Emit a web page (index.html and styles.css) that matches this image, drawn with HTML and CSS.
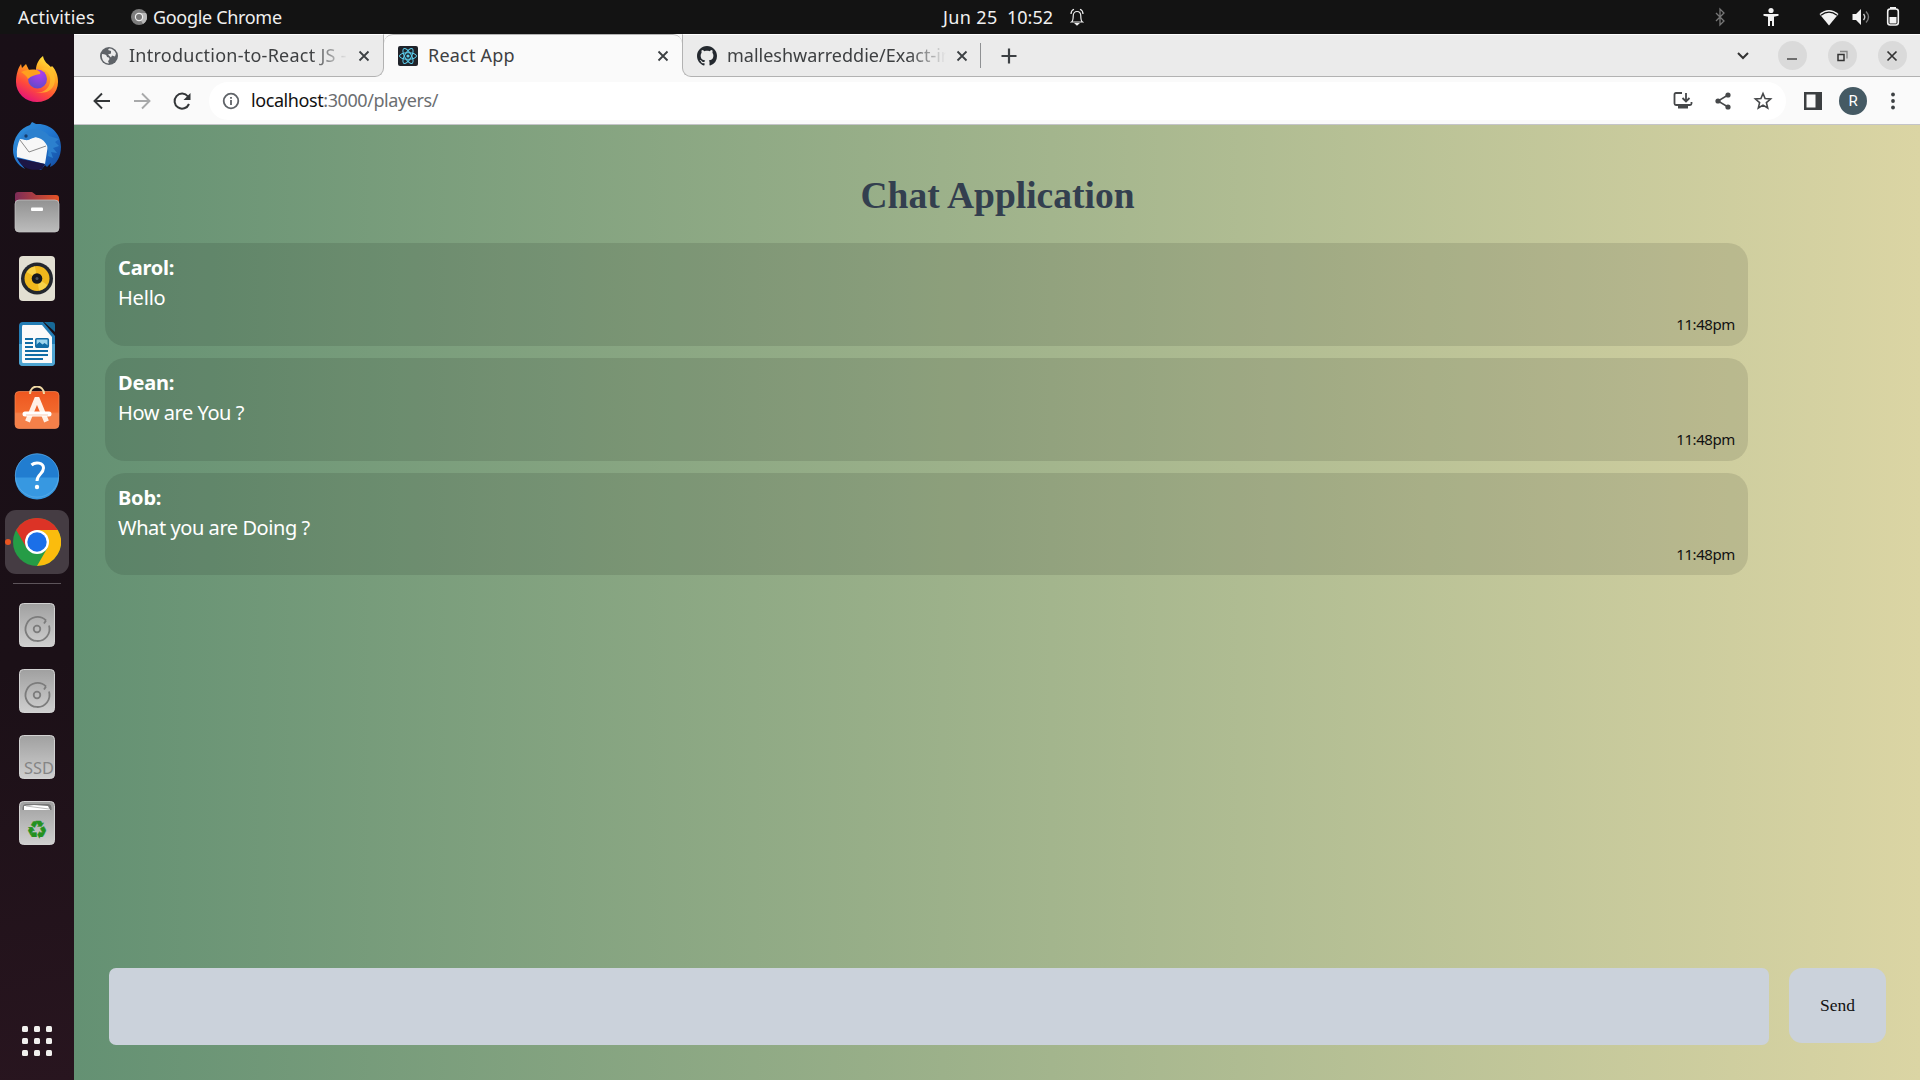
FILE: index.html
```html
<!DOCTYPE html>
<html lang="en">
<head>
<meta charset="utf-8">
<title>React App</title>
<link rel="stylesheet" href="styles.css">
</head>
<body>
<header class="topbar">
  <span class="activities">Activities</span>
  <svg class="app-icon" width="16" height="16" viewBox="0 0 16 16"><circle cx="8" cy="8" r="8" fill="#7d7d7d"/><path d="M8 8 12 15A8 8 0 0 0 15 4H8z" fill="#b8b8b8"/><circle cx="8" cy="8" r="4.2" fill="#eee"/><circle cx="8" cy="8" r="3" fill="#777"/></svg>
  <span class="app-name">Google Chrome</span>
  <div class="clock"><span class="date">Jun 25</span><span class="time-now">10:52</span>
    <svg width="14" height="18" viewBox="0 0 14 18" fill="none" stroke="#eee" stroke-width="1.2"><path d="M1.5 14c1.7-1 1.7-3 1.7-6C3.2 5 5 3.5 7 3.5S10.800 5 10.800 8c0 3 0 5 1.700 6z"/><path d="M1 6C1 4 2.300 2 4 1.300M13 6c0-2-1.300-4-3-4.700"/><path d="M5.500 15.500h3L7 17z" fill="#eee"/></svg>
  </div>
  <div class="system">
    <svg class="bt" width="32" height="20" viewBox="0 0 32 20" fill="none" stroke="#777" stroke-width="1.300"><path d="M12 6l8 8-4 4V2l4 4-8 8"/></svg>
    <svg class="access" width="32" height="20" viewBox="0 0 32 20" fill="#f2f2f2"><circle cx="16" cy="3.500" r="2.600"/><path d="M8.500 7h15v1.700l-4.500 1V19h-2v-5h-2v5h-2V9.700l-4.500-1z"/></svg>
    <svg width="32" height="20" viewBox="0 0 32 20"><path d="M6.500 7q9.500-8 19 0L16 18.500z" fill="#f2f2f2"/><path d="M8 8.200q8-6 16 0" fill="none" stroke="#131313" stroke-width="1.300"/></svg>
    <svg width="32" height="20" viewBox="0 0 32 20" fill="none" stroke-width="1.400"><path d="M7.500 7h3.500l5-5v16l-5-5H7.500z" fill="#f2f2f2"/><path d="M18.500 7q2.500 3 0 6" stroke="#ccc"/><path d="M21 4.500q5 5.500 0 11" stroke="#777"/></svg>
    <svg width="32" height="20" viewBox="0 0 32 20"><path d="M13 0h6v2h-6z" fill="#f2f2f2"/><rect x="10.700" y="2" width="10.600" height="16" rx="2.500" fill="none" stroke="#f2f2f2" stroke-width="1.600"/><path d="M12.500 10h7v6.500h-7z" fill="#f2f2f2"/></svg>
  </div>
</header>
<div class="desktop">
<nav class="dock">
  <div class="dock-item"><svg width="48" height="48" viewBox="0 1 48 48">
    <defs><linearGradient id="ff" x1=".8" y1="0" x2=".3" y2="1"><stop offset="0" stop-color="#ffef40"/><stop offset=".4" stop-color="#ff9a1f"/><stop offset=".7" stop-color="#ff4b3a"/><stop offset="1" stop-color="#e3127b"/></linearGradient><radialGradient id="fp" cx=".6" cy=".2" r=".9"><stop offset="0" stop-color="#b43af0"/><stop offset="1" stop-color="#5a4cc4"/></radialGradient></defs>
    <path d="M3 27C3 20 5 13 8 9l1 4 4-4 3 6 7 0c0-6 3-11 7-14 1 6 5 8 8 11l1-1c4 4 6 10 6 16A21 20 0 0 1 3 27z" fill="url(#ff)"/>
    <circle cx="24.500" cy="24" r="9.500" fill="url(#fp)"/><path d="M8 17c5-2 10-3 16-2 3 1 4 3 3 4-5 1-9 2-12 5-1-3-4-5-7-7z" fill="#ffa01e"/><path d="M28 14c7 1 10 7 9 13-1 7-8 12-15 10 11 3 20-2 20-13-1-9-7-13-14-10z" fill="#ffc22e" opacity=".7"/></svg></div>
  <div class="dock-item"><svg width="48" height="48" viewBox="0 0 48 48">
    <defs><linearGradient id="tb" x1="0" y1="0" x2="1" y2="1"><stop offset="0" stop-color="#3394dd"/><stop offset=".5" stop-color="#2277cf"/><stop offset="1" stop-color="#134aa0"/></linearGradient></defs>
    <path d="M0 28C0 16 7 6 17 3l2-3 4 2c14-1 25 9 25 23 0 9-4 17-11 20l1-4-4 4-2-2-4 5-22-9 6 8C4 43 0 36 0 28z" fill="url(#tb)"/>
    <path d="M7 17l7 1 9-3 9 2 3 6-3 19L4 35Q3 25 7 17z" fill="#f7f7f7"/><path d="M7 18l9 12 17-6" fill="none" stroke="#8b8b8b"/><path d="M8 16C11 6 28 3 36 14l10 3-4 3 4 4-6 2 4 5-6-1 2 6-5-2C37 24 31 16 22 15c-4 0-5 4-10 3z" fill="#2c80ce"/><path d="M4 36l28 6-3 5C17 50 8 45 4 36z" fill="#1c1645"/><circle cx="13" cy="14" r="1.700" fill="#163d6d"/></svg></div>
  <div class="dock-item"><svg width="48" height="48" viewBox="0 0 48 48"><defs><linearGradient id="fo"><stop stop-color="#7c2c58"/><stop offset="1" stop-color="#e65325"/></linearGradient><linearGradient id="gr" x2="0" y2="1"><stop stop-color="#929292"/><stop offset="1" stop-color="#bcbcbc"/></linearGradient></defs>
    <path d="M2 16V7q0-3 3-3h14l4 3h20q3 0 3 3v10z" fill="url(#fo)"/><rect x="2" y="12" width="44" height="32" rx="4" fill="url(#gr)" stroke="#c7c7c7" stroke-width=".7"/><rect x="18" y="19.500" width="12" height="3.500" rx="1" fill="#fff"/></svg></div>
  <div class="dock-item"><svg width="48" height="48" viewBox="0 0 48 48"><rect x="6" y="2" width="36" height="45" rx="4" fill="#e2dfd2"/><circle cx="24" cy="24.500" r="16" fill="#23272e"/><circle cx="24" cy="24.500" r="12.500" fill="#f0b81c"/><path d="M13.500 18A12 12 0 0 1 22 12.500L24 24zM34.500 31A12 12 0 0 1 26 36.500L24 24z" fill="#f8d248"/><circle cx="24" cy="24.500" r="5.300" fill="#15181d"/><circle cx="24" cy="24.500" r="1.500" fill="#48515c"/></svg></div>
  <div class="dock-item"><svg width="48" height="48" viewBox="0 0 48 48"><path d="M6 6q0-4 4-4h20l12 14v26q0 4-4 4H10q-4 0-4-4z" fill="#247eb6"/><path d="M6 24h36v18q0 4-4 4H10q-4 0-4-4z" fill="#4fa5d2"/><path d="M10 5h19l10 12v26H10q-1 0-1-2V7q0-2 1-2z" fill="#fafafa"/><path d="M31 2h8q3 0 3 3v7z" fill="#176997"/><path d="M12 19h8M12 23h8M12 27h8M12 31h23M12 35h23M12 39h18" stroke="#116ca5" stroke-width="2"/><rect x="22.800" y="18.800" width="12.500" height="8.500" rx="1" fill="#9bd4ed" stroke="#116ca5" stroke-width="1.600"/><path d="M23 27.500v-2.500l3.500-3 3 2.500 2-1.500 3.500 2.500v2z" fill="#116ca5"/></svg></div>
  <div class="dock-item"><svg width="48" height="48" viewBox="0 3.500 48 48"><defs><linearGradient id="so" x2="0" y2="1"><stop stop-color="#ee5720"/><stop offset=".55" stop-color="#f2692d"/><stop offset=".6" stop-color="#f48049"/></linearGradient></defs><rect x="2" y="9" width="44" height="37" rx="4" fill="url(#so)" stroke="#f68b56" stroke-width=".7"/><path d="M17 11.500c0-10 14-10 14 0" fill="none" stroke="#efd9a5" stroke-width="2"/><path d="M14.500 39 23.500 17h1l9 22" fill="none" stroke="#fff0e5" stroke-width="5"/><path d="M12 31.500h24" stroke="#fff" stroke-width="5" stroke-linecap="round"/><path d="M13 32.500h22" stroke="#f4b190" stroke-width=".7"/></svg></div>
  <div class="dock-item"><svg width="48" height="48" viewBox="0 1.500 48 48"><circle cx="24" cy="25" r="22" fill="#217dd0"/><path d="M2 27a22 22 0 0 0 44 0z" fill="#3798e1"/><circle cx="24" cy="25" r="21.700" fill="none" stroke="#67b2ea" stroke-width=".6"/><path d="M18.500 14.500c4-3.500 12-2.500 12 3 0 6-6.500 6-6.500 13" fill="none" stroke="#fff" stroke-width="3"/><circle cx="24" cy="36.500" r="2.200" fill="#fff"/></svg></div>
  <div class="dock-item active"><svg width="48" height="48" viewBox="0 0 48 48"><circle cx="24" cy="24" r="24" fill="#259c46"/><path d="M3.200 12A24 24 0 0 1 44.800 12H24L13.600 30z" fill="#dc3326"/><path d="M44.800 12A24 24 0 0 1 24 48L34.400 30 24 12z" fill="#fbbc0d"/><circle cx="24" cy="24" r="12" fill="#fff"/><circle cx="24" cy="24" r="9.700" fill="#1b6fe8"/></svg></div>
  <div class="dock-line"></div>
  <div class="dock-item"><svg class="drive" width="36" height="44" viewBox="0 0 36 44" fill="none" stroke="#7c7c7c" stroke-width="1.800"><defs><linearGradient id="case" x2="0" y2="1"><stop stop-color="#a0a0a0"/><stop offset="1" stop-color="#cfcfcf"/></linearGradient></defs><rect class="case" x=".500" y=".500" width="35" height="43" rx="4" fill="url(#case)"/><path d="M27 17.500A12 12 0 1 0 30 22.500M27 17.500l-2 3"/><circle cx="18" cy="26" r="3.300"/></svg></div>
  <div class="dock-item"><svg class="drive" width="36" height="44" viewBox="0 0 36 44" fill="none" stroke="#7c7c7c" stroke-width="1.800"><rect class="case" x=".500" y=".500" width="35" height="43" rx="4" fill="url(#case)"/><path d="M27 17.500A12 12 0 1 0 30 22.500M27 17.500l-2 3"/><circle cx="18" cy="26" r="3.300"/></svg></div>
  <div class="dock-item"><svg width="36" height="44" viewBox="0 0 36 44"><rect class="case" x=".500" y=".500" width="35" height="43" rx="4" fill="url(#case)"/><text x="5" y="39" class="ssd" textLength="30" lengthAdjust="spacingAndGlyphs">SSD</text></svg></div>
  <div class="dock-item"><svg width="36" height="44" viewBox="0 0 36 44"><rect class="case" x=".500" y=".500" width="35" height="43" rx="4" fill="url(#case)"/><path d="M3.500 9Q3 3 7 3h22q4 0 3.500 6z" fill="#777"/><path d="M5 9V5l10-1 14 1 2 4z" fill="#fff"/><path d="M7 5l23 3" stroke="#bbb"/><text x="18" y="36.500" class="recycle">♻</text></svg></div>
  <div class="apps"><i></i><i></i><i></i><i></i><i></i><i></i><i></i><i></i><i></i></div>
</nav>
<section class="browser">
  <div class="tabs">
    <div class="tab first">
      <svg class="fav" width="20" height="20" viewBox="0 0 20 20"><circle cx="10" cy="10" r="9" fill="#5f6368"/><path d="M3 8c3 0 5 1 5 3 3 0 3 3 1 4l1 2.500C5 17.500 2 13 3 8zM10 2.500c3 0 6 2 7 5l-1 3-3-1-1 2-3-3 3-1V5l-3-1z" fill="#ebebeb"/></svg>
      <span class="label fade"><span class="t1">Introduction-to-React JS -</span></span>
      <svg class="x" width="12" height="12" viewBox="0 0 12 12"><path d="M1.500 1.500l9 9m0-9l-9 9"/></svg>
    </div>
    <div class="tab current">
      <svg class="fav" width="20" height="20" viewBox="0 0 20 20"><rect width="20" height="20" rx="2" fill="#20232a"/><g fill="none" stroke="#5ccfee" stroke-width="1"><ellipse cx="10" cy="10" rx="8.500" ry="3.300"/><ellipse cx="10" cy="10" rx="8.500" ry="3.300" transform="rotate(60 10 10)"/><ellipse cx="10" cy="10" rx="8.500" ry="3.300" transform="rotate(120 10 10)"/></g><circle cx="10" cy="10" r="1.600" fill="#5ccfee"/></svg>
      <span class="label"><span class="t2">React App</span></span>
      <svg class="x" width="12" height="12" viewBox="0 0 12 12"><path d="M1.500 1.500l9 9m0-9l-9 9"/></svg>
    </div>
    <div class="tab last">
      <svg class="fav" width="20" height="20" viewBox="0 0 16 16" fill="#24292f"><path d="M8 0C3.580 0 0 3.580 0 8c0 3.540 2.290 6.530 5.470 7.590.4.070.55-.17.55-.38 0-.19-.01-.82-.01-1.490-2.010.37-2.530-.49-2.690-.94-.09-.23-.48-.94-.82-1.130-.28-.15-.68-.52-.01-.53.63-.01 1.080.58 1.230.82.72 1.210 1.870.87 2.330.66.07-.52.28-.87.51-1.070-1.780-.2-3.640-.89-3.640-3.950 0-.87.31-1.590.82-2.150-.08-.2-.36-1.020.08-2.120 0 0 .67-.21 2.200.82.64-.18 1.320-.27 2-.27s1.360.09 2 .27c1.530-1.040 2.200-.82 2.200-.82.44 1.100.16 1.920.08 2.120.51.560.82 1.270.82 2.150 0 3.070-1.870 3.750-3.650 3.950.29.250.54.730.54 1.480 0 1.070-.01 1.930-.01 2.200 0 .21.15.46.55.38A8 8 0 0 0 16 8c0-4.420-3.580-8-8-8z"/></svg>
      <span class="label fade"><span class="t3">malleshwarreddie/Exact-in</span></span>
      <svg class="x" width="12" height="12" viewBox="0 0 12 12"><path d="M1.500 1.500l9 9m0-9l-9 9"/></svg>
    </div>
    <div class="strip">
      <svg class="plus" width="16" height="16" viewBox="0 0 16 16"><path d="M8 .500v15M.500 8h15" stroke="#3c4043" stroke-width="2.200"/></svg>
      <div class="chev"><svg width="12" height="8" viewBox="0 0 12 8" fill="none" stroke="#333" stroke-width="2"><path d="M1 1l5 5 5-5"/></svg></div>
      <div class="win"><svg width="12" height="12" viewBox="0 0 12 12"><path d="M1 9h10"/></svg></div>
      <div class="win"><svg width="12" height="12" viewBox="0 0 12 12"><path d="M4 1.500h7v7" opacity=".5"/><path d="M2 4.500h6v6H2z" stroke-width="1.500"/></svg></div>
      <div class="win"><svg width="12" height="12" viewBox="0 0 12 12"><path d="M1.500 1.500l9 9m0-9l-9 9" stroke-width="1.700"/></svg></div>
    </div>
  </div>
  <div class="toolbar">
    <div class="slot"><svg width="18" height="18" viewBox="0 0 18 18" fill="none" stroke="#333638" stroke-width="1.900"><path d="M17 9H2M9 1.500L1.500 9 9 16.500"/></svg></div>
    <div class="slot"><svg width="18" height="18" viewBox="0 0 18 18" fill="none" stroke="#a8a9aa" stroke-width="1.900"><path d="M1 9h15M9 1.500L16.500 9 9 16.500"/></svg></div>
    <div class="slot"><svg width="20" height="20" viewBox="0 0 20 20" fill="none" stroke="#333638" stroke-width="2"><path d="M17 13a7.500 7.500 0 1 1-1-7.500"/><path d="M18.500 2v7h-7z" fill="#333638" stroke="none"/></svg></div>
    <div class="omnibox">
      <svg class="info" width="18" height="18" viewBox="0 0 18 18" fill="none" stroke="#5f6368" stroke-width="1.800"><circle cx="9" cy="9" r="7.300"/><path d="M9 8v5M9 5v1.800"/></svg>
      <span class="url"><b>localhost</b>:3000/players/</span>
      <div class="slot"><svg width="20" height="20" viewBox="0 0 20 20" fill="none" stroke="#46484a" stroke-width="1.800"><path d="M9 2H3q-1.500 0-1.500 1.500v9Q1.500 14 3 14h14q1.500 0 1.500-1.500V11"/><path d="M13 2v8M9.500 7l3.500 3.500L16.500 7"/><path d="M5 15h10v2.500H5z" fill="#46484a" stroke="none"/></svg></div>
      <div class="slot"><svg width="18" height="18" viewBox="0 0 18 18"><path d="M14 3L4 9l10 6" fill="none" stroke="#46484a" stroke-width="1.500"/><g fill="#46484a"><circle cx="14" cy="3" r="2.600"/><circle cx="4" cy="9" r="2.600"/><circle cx="14" cy="15" r="2.600"/></g></svg></div>
      <div class="slot"><svg width="20" height="20" viewBox="0 0 20 20" fill="none" stroke="#46484a" stroke-width="1.600"><path d="M10 2.500l2.100 5.100 5.500.4-4.200 3.600 1.300 5.400-4.700-2.900L5.300 17l1.300-5.400L2.400 8l5.500-.4z"/></svg></div>
    </div>
    <div class="slot side"><svg width="18" height="18" viewBox="0 0 18 18"><path d="M0 0h18v18H0z" fill="#3c3f41"/><path d="M2.500 2.500h9v13h-9z" fill="#fafafa"/></svg></div>
    <div class="slot"><span class="avatar">R</span></div>
    <div class="slot"><svg width="4" height="18" viewBox="0 0 4 18" fill="#3c4043"><circle cx="2" cy="2.500" r="1.900"/><circle cx="2" cy="9" r="1.900"/><circle cx="2" cy="15.500" r="1.900"/></svg></div>
  </div>
  <main class="chat">
    <h1>Chat Application</h1>
    <div class="messages">
      <article class="message"><b>Carol:</b><p class="short">Hello</p><time>11:48pm</time></article>
      <article class="message"><b>Dean:</b><p>How are You ?</p><time>11:48pm</time></article>
      <article class="message"><b>Bob:</b><p>What you are Doing ?</p><time>11:48pm</time></article>
    </div>
    <form class="composer"><input type="text" aria-label="Message"><button type="button">Send</button></form>
  </main>
</section>
</div>
</body>
</html>
```
FILE: styles.css
```css
* { box-sizing: border-box; }
body { margin: 0; width: 1920px; height: 1080px; overflow: hidden; display: flex; flex-direction: column; font-family: "Noto Sans", "Open Sans", sans-serif; }
svg { display: block; flex: none; }

.topbar { height: 34px; flex: none; display: flex; align-items: center; background: #131313; color: #f0f0f0; font-size: 18px; line-height: 34px; padding: 0 11px 0 18px; white-space: nowrap; }
.activities { width: 113px; letter-spacing: .17px; }
.app-icon { margin-right: 6px; }
.app-name { width: 790px; letter-spacing: -.32px; }
.clock { display: flex; align-items: center; flex: 1; }
.date { width: 64px; letter-spacing: .35px; }
.time-now { width: 63px; }
.system { display: flex; align-items: center; }
.bt { margin-right: 19px; }
.access { margin-right: 26px; }

.desktop { display: flex; flex: 1; min-height: 0; }
.dock { width: 74px; flex: none; padding: 13px 0 21px; display: flex; flex-direction: column; align-items: center; background: linear-gradient(170deg, #190f17 0%, #1b1017 60%, #28151f 100%); }
.dock-item { width: 64px; height: 66px; flex: none; display: flex; align-items: center; justify-content: center; }
.active { height: 64px; margin: 1px 0; border-radius: 11px; background: #453c43; position: relative; }
.active::before { content: ""; position: absolute; left: 0; top: 29px; width: 6px; height: 6px; border-radius: 50%; background: #e95420; }
.dock-line { width: 48px; height: 1px; margin: 8px 0; background: #5d545a; flex: none; }
.case { stroke: #d2d2d2; stroke-width: 1; }
.ssd { font: 16px "Noto Sans", sans-serif; fill: #858585; }
.recycle { font: 24px "DejaVu Sans", sans-serif; fill: #23911f; stroke: #23911f; stroke-width: .4; text-anchor: middle; }
.apps { margin-top: auto; display: grid; grid-template-columns: repeat(3, 6px); grid-auto-rows: 6px; gap: 6px; margin-bottom: 3px; }
.apps i { background: #f1f0ee; border-radius: 1.500px; }

.browser { flex: 1; min-width: 0; display: flex; flex-direction: column; }
.tabs { height: 43px; flex: none; display: flex; background: #fafafa; }
.tab, .strip { display: flex; align-items: center; background: #ebebeb; border-bottom: 1px solid #b2b2b2; border-top: 1px solid #fff; height: 43px; }
.tab { font-size: 18px; color: #3e4042; line-height: 38px; white-space: nowrap; }
.first { width: 310px; padding-left: 25px; border-right: 1px solid #b2b2b2; border-bottom-right-radius: 9px; }
.current { width: 298px; padding-left: 14px; background: #fafafa; border-top: 1px solid #b2b2b2; border-bottom-color: #fafafa; border-radius: 9px 9px 0 0; }
.last { width: 298px; padding-left: 14px; border-left: 1px solid #b2b2b2; border-bottom-left-radius: 9px; }
.label { width: 219px; height: 40px; margin: 0 10px; overflow: hidden; }
.t1 { letter-spacing: .25px; }
.t2 { letter-spacing: .2px; }
.fade { -webkit-mask-image: linear-gradient(90deg, #000 83%, transparent); mask-image: linear-gradient(90deg, #000 83%, transparent); }
.x { fill: none; stroke: #3c4043; stroke-width: 1.800; }
.strip { flex: 1; padding-right: 3px; }
.strip::before { content: ""; width: 1px; height: 25px; background: #8f9193; }
.plus { margin: 0 auto 0 20px; }
.chev { width: 48px; display: flex; justify-content: center; }
.win { width: 29px; height: 29px; border-radius: 50%; background: #dadada; margin: 0 10.500px; display: flex; align-items: center; justify-content: center; }
.win svg { fill: none; stroke: #333; stroke-width: 1.300; }

.toolbar { height: 48px; flex: none; display: flex; align-items: center; padding: 0 7px 0 8px; background: #fafafa; border-bottom: 1px solid #c4c4c8; }
.slot { width: 40px; flex: none; display: flex; justify-content: center; align-items: center; }
.omnibox { flex: 1; height: 38px; margin-left: 7px; border-radius: 19px; background: #fff; display: flex; align-items: center; padding: 0 3px 0 13px; }
.url { flex: 1; margin-left: 11px; padding-bottom: 1px; font-size: 18px; letter-spacing: -.42px; color: #6b6e71; }
.url b { font-weight: 400; color: #111; }
.side { margin-left: 7px; }
.avatar { width: 28px; height: 28px; border-radius: 50%; background: #455a64; color: #fff; font: 15px/28px Roboto, sans-serif; text-align: center; }

.chat { flex: 1; min-height: 0; display: flex; flex-direction: column; padding: 49px 34px 35px 31px; background: linear-gradient(to right, #649173, #dbd5a4); }
h1 { margin: 0 0 26px; font: bold 37.500px/43px "Liberation Serif", serif; color: #333f4f; text-align: center; padding-left: 4px; }
.messages { display: flex; flex-direction: column; gap: 12px; width: 1643px; }
.message { height: 103px; padding: 10px 13px; border-radius: 20px; background: rgba(0, 0, 0, .1); color: #fff; font-size: 20px; line-height: 30px; display: flex; flex-direction: column; white-space: nowrap; }
.message:last-child { height: 102px; }
.message b { align-self: flex-start; letter-spacing: -.2px; }
.message p { margin: 0; align-self: flex-start; letter-spacing: -.43px; }
.message .short { letter-spacing: -.2px; }
.message time { align-self: flex-end; color: #111; font-size: 15px; letter-spacing: -.4px; line-height: 22px; }
.composer { margin-top: auto; display: flex; align-items: flex-start; gap: 20px; padding-left: 4px; }
.composer input { width: 1660px; height: 77px; border: 0; border-radius: 7px; background: #cbd2db; }
.composer button { width: 97px; height: 75px; border: 0; border-radius: 13px; background: #cbd2db; color: #111; font: 17.500px "Liberation Serif", serif; padding: 0; }
```
